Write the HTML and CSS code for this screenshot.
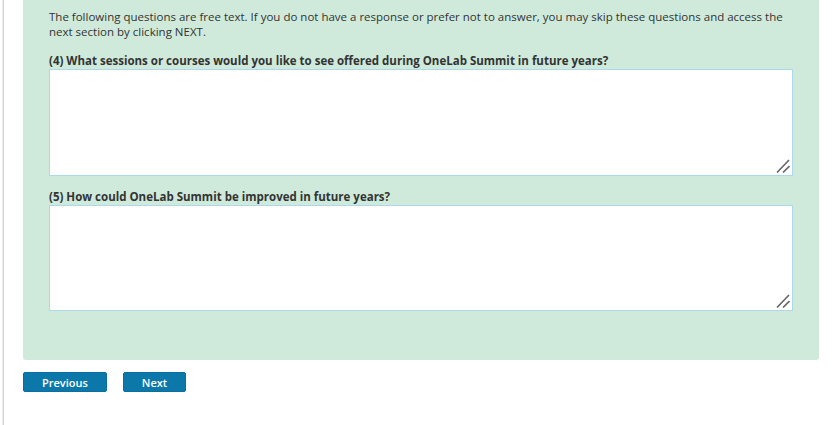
FILE: index.html
```html
<!DOCTYPE html>
<html lang="en">

<head>
	<title>OneLab Summit Survey</title>
	<meta charset="utf-8">
	<link rel="stylesheet" href="styles.css">
</head>

<body>
	<div class="page">
		<form class="survey">
			<div class="section">
				<p class="intro">
					The following questions are free text. If you do not have a response or prefer not to answer, you may skip these questions and access the next section by clicking NEXT.
				</p>

				<label class="question" for="q4">(4) What sessions or courses would you like to see offered during OneLab Summit in future years?</label>
				<div class="field">
					<textarea id="q4" class="answer"></textarea>
					<svg class="grip" width="14" height="14" viewBox="0 0 14 14">
						<path d="M1 13.5 L13 1 M7 13.5 L13.5 7" />
					</svg>
				</div>

				<label class="question" for="q5">(5) How could OneLab Summit be improved in future years?</label>
				<div class="field">
					<textarea id="q5" class="answer"></textarea>
					<svg class="grip" width="14" height="14" viewBox="0 0 14 14">
						<path d="M1 13.5 L13 1 M7 13.5 L13.5 7" />
					</svg>
				</div>
			</div>

			<div class="nav">
				<button type="button" class="btn">Previous</button>
				<button type="button" class="btn">Next</button>
			</div>
		</form>
	</div>
</body>
</html>
```

FILE: styles.css
```css
* {
	margin: 0;
	box-sizing: border-box;
}

body {
	font-family: 'Open Sans', 'Noto Sans', sans-serif;
	font-size: 11.5px;
	color: #333;
	background: white;
	margin: 0;
	height: 425px;
	overflow: hidden;
}

.page {
	margin-left: 3px;
	height: 425px;
	border-left: 1px solid #d4d4d4;
	box-shadow: -1px 0 0 #ececec;
	padding: 0 19px;
}

.section {
	width: 796px;
	background: #cfeadb;
	border-radius: 0 0 3px 3px;
	padding: 9px 26px 49px 26px;
}

.intro {
	line-height: 15px;
	margin-bottom: 14px;
}

.question {
	display: block;
	font-weight: bold;
	line-height: 15px;
	margin-bottom: 1px;
}

.field {
	position: relative;
	margin-bottom: 13px;
}

.field:last-child {
	margin-bottom: 0;
}

.answer {
	display: block;
	width: 744px;
	height: 107px;
	border: 1px solid #acd9ea;
	background: white;
	font-family: inherit;
	resize: none;
}

.field:last-child .answer {
	height: 106px;
}

.grip {
	position: absolute;
	right: 3px;
	bottom: 3px;
	fill: none;
	stroke: #666;
	stroke-width: 1.6;
}

.nav {
	display: flex;
	gap: 16px;
	margin-top: 12px;
}

.btn {
	height: 20px;
	padding: 0 18px;
	border: 1px solid #0a6f9e;
	border-radius: 2px;
	background: #0b78a9;
	color: white;
	font-family: inherit;
	font-size: 11px;
	font-weight: 600;
}
```
